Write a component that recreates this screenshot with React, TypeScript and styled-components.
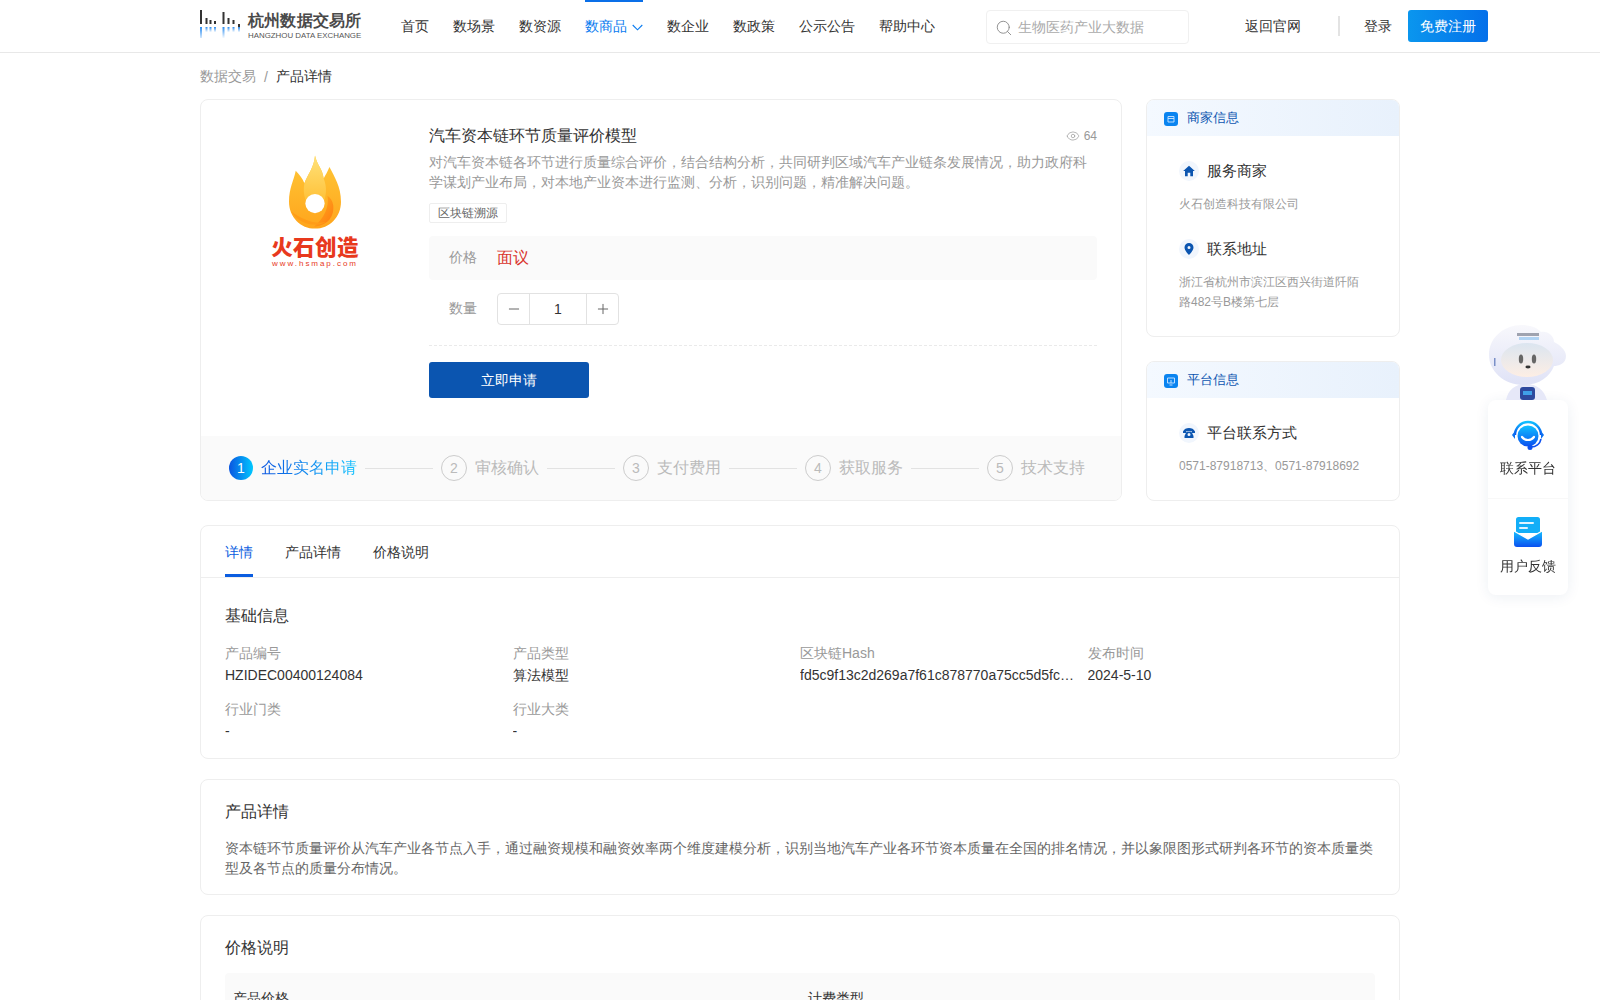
import React from 'react';
import styled, { createGlobalStyle } from 'styled-components';
import { Eye, Minus, Plus, Search } from 'lucide-react';

const Global = createGlobalStyle`
  html, body { margin: 0; padding: 0; background: #fff; overflow: hidden; height: 1000px; }
  body { font-family: "Liberation Sans", sans-serif; color: #333; font-size: 14px; }
  * { box-sizing: border-box; }
`;

const Header = styled.header`
  height: 53px;
  border-bottom: 1px solid #e8e8e8;
  padding-left: 200px;
  display: flex;
  align-items: flex-start;
  background: #fff;
`;
const LogoWrap = styled.div`
  width: 162px;
  height: 52px;
  margin-right: 39px;
  display: flex;
  align-items: flex-start;
  padding-top: 10px;
  gap: 6px;
`;
const LogoText = styled.div`
  display: flex;
  flex-direction: column;
  padding: 2px 0 0 1px;
`;
const LogoCn = styled.span`
  font-size: 16px;
  line-height: 18px;
  font-weight: 700;
  letter-spacing: 0.2px;
  white-space: nowrap;
  color: #4a4a4a;
`;
const LogoEn = styled.span`
  font-size: 7.9px;
  line-height: 11px;
  white-space: nowrap;
  color: #555;
`;
const Nav = styled.nav`
  display: flex;
  gap: 24px;
`;
const NavItem = styled.a<{ $active?: boolean }>`
  height: 52px;
  display: flex;
  align-items: center;
  gap: 5px;
  font-size: 14px;
  color: ${p => (p.$active ? '#0a7cf0' : '#333')};
  border-top: 2px solid ${p => (p.$active ? '#0a6fe8' : 'transparent')};
  white-space: nowrap;
`;
const SearchBox = styled.div`
  width: 203px;
  height: 34px;
  margin: 10px 0 0 51px;
  padding: 2px 0 0 8px;
  border: 1px solid #f0f0f0;
  border-radius: 4px;
  display: flex;
  align-items: center;
  gap: 5px;
  color: #888;
`;
const Placeholder = styled.span`
  color: #aaa;
  font-size: 14px;
`;
const TopLink = styled.a<{ $ml: number }>`
  margin-left: ${p => p.$ml}px;
  height: 52px;
  padding-top: 1px;
  display: flex;
  align-items: center;
  font-size: 14px;
  color: #333;
  white-space: nowrap;
`;
const VLine = styled.span`
  width: 2px;
  height: 20px;
  margin: 16px 0 0 37px;
  background: #e3e3e3;
`;
const Register = styled.button`
  width: 80px;
  height: 32px;
  margin: 10px 0 0 16px;
  padding: 1px 0 0;
  border: 0;
  border-radius: 3px;
  color: #fff;
  font: inherit;
  font-size: 14px;
  background: linear-gradient(90deg, #0a96ee, #0470ea);
`;

const Page = styled.main`
  width: 1200px;
  margin: 0 auto;
`;
const Crumbs = styled.div`
  height: 46px;
  padding-top: 2px;
  display: flex;
  align-items: center;
  gap: 8px;
  font-size: 14px;
  color: #999;
`;
const CrumbNow = styled.span`
  color: #333;
`;
const TopRow = styled.div`
  display: flex;
  justify-content: space-between;
  align-items: stretch;
`;
const Card = styled.section`
  border: 1px solid #eeeeee;
  border-radius: 8px;
  background: #fff;
  overflow: hidden;
`;
const MainCard = styled(Card)`
  width: 922px;
  height: 402px;
  display: flex;
  flex-direction: column;
`;
const Product = styled.div`
  flex: 1;
  display: flex;
  padding: 24px 24px 0 0;
`;
const Brand = styled.div`
  width: 228px;
  flex: none;
  display: flex;
  flex-direction: column;
  align-items: center;
  padding-top: 30px;
`;
const BrandCn = styled.span`
  margin-top: 3px;
  font-size: 21.5px;
  line-height: 26px;
  font-weight: 900;
  font-family: "Noto Sans CJK SC", sans-serif;
  color: #e8391d;
  letter-spacing: 0.4px;
`;
const BrandEn = styled.span`
  font-size: 8px;
  line-height: 9px;
  color: #e8391d;
  letter-spacing: 1.95px;
`;
const Info = styled.div`
  flex: 1;
  min-width: 0;
`;
const TitleRow = styled.div`
  display: flex;
  justify-content: space-between;
  align-items: center;
  height: 24px;
`;
const Title = styled.h1`
  margin: 0;
  font-size: 16px;
  font-weight: 400;
  color: #333;
`;
const Views = styled.span`
  display: flex;
  align-items: center;
  gap: 4px;
  font-size: 12px;
  color: #999;
`;
const Desc = styled.p`
  margin: 4px 0 0;
  font-size: 14px;
  line-height: 20px;
  color: #999;
`;
const Tag = styled.span`
  display: inline-block;
  margin-top: 11px;
  height: 20px;
  padding: 0 8px;
  border: 1px solid #eee;
  border-radius: 2px;
  font-size: 12px;
  line-height: 18px;
  color: #666;
`;
const PriceRow = styled.div`
  margin-top: 13px;
  height: 44px;
  background: #fafafa;
  border-radius: 4px;
  display: flex;
  align-items: center;
  padding-left: 20px;
`;
const FieldLabel = styled.span`
  width: 48px;
  flex: none;
  font-size: 14px;
  color: #999;
`;
const PriceValue = styled.span`
  font-size: 16px;
  color: #d9322c;
`;
const QtyRow = styled.div`
  margin-top: 13px;
  display: flex;
  align-items: center;
  padding: 0 0 20px 20px;
  border-bottom: 1px dashed #eaeaea;
`;
const Stepper = styled.div`
  width: 122px;
  height: 32px;
  display: flex;
  border: 1px solid #e2e2e2;
  border-radius: 4px;
`;
const StepBtn = styled.span`
  width: 31px;
  display: flex;
  align-items: center;
  justify-content: center;
  color: #666;
`;
const StepVal = styled.span`
  flex: 1;
  border-left: 1px solid #e2e2e2;
  border-right: 1px solid #e2e2e2;
  display: flex;
  align-items: center;
  justify-content: center;
  font-size: 14px;
  color: #333;
`;
const Apply = styled.button`
  margin-top: 16px;
  padding: 1px 0 0;
  display: block;
  width: 160px;
  height: 36px;
  border: 0;
  border-radius: 3px;
  background: #0b55b0;
  color: #fff;
  font: inherit;
  font-size: 14px;
`;
const Steps = styled.div`
  height: 64px;
  flex: none;
  background: #fafafa;
  display: flex;
  align-items: center;
  padding-left: 28px;
  gap: 8px;
`;
const StepCircle = styled.span<{ $active?: boolean }>`
  width: ${p => (p.$active ? 24 : 26)}px;
  height: ${p => (p.$active ? 24 : 26)}px;
  border-radius: 50%;
  display: flex;
  align-items: center;
  justify-content: center;
  font-size: 14px;
  color: ${p => (p.$active ? '#fff' : '#bbb')};
  border: ${p => (p.$active ? '0' : '1px solid #ccc')};
  background: ${p => (p.$active ? 'linear-gradient(90deg, #0a55e0, #00c8ff)' : 'transparent')};
`;
const StepText = styled.span<{ $active?: boolean }>`
  font-size: 16px;
  white-space: nowrap;
  color: ${p => (p.$active ? 'transparent' : '#bbb')};
  background: ${p => (p.$active ? 'linear-gradient(90deg, #0a55e0, #18c4ff)' : 'none')};
  -webkit-background-clip: ${p => (p.$active ? 'text' : 'border-box')};
  background-clip: ${p => (p.$active ? 'text' : 'border-box')};
`;
const StepLine = styled.span`
  width: 68px;
  height: 1px;
  background: #e2e2e2;
  margin: 1px 0 0;
`;
const Side = styled.aside`
  width: 254px;
  display: flex;
  flex-direction: column;
  gap: 24px;
`;
const SideCard = styled(Card)<{ $grow?: boolean }>`
  height: ${p => (p.$grow ? 'auto' : '238px')};
  flex: ${p => (p.$grow ? 1 : 'none')};
`;
const SideHead = styled.div`
  height: 36px;
  display: flex;
  align-items: center;
  gap: 9px;
  padding-left: 17px;
  font-size: 13px;
  color: #0b55b0;
  background: linear-gradient(90deg, #f4f9ff, #e8f1fc);
`;
const SideBody = styled.div`
  padding: 25px 32px 0;
`;
const SideTitle = styled.div`
  display: flex;
  align-items: center;
  gap: 8px;
  height: 20px;
  font-size: 15px;
  color: #333;
  white-space: nowrap;
`;
const IconDot = styled.span`
  width: 20px;
  height: 20px;
  border-radius: 50%;
  background: #f1f6fd;
  display: flex;
  align-items: center;
  justify-content: center;
`;
const SideText = styled.p`
  margin: 13px 0 25px;
  font-size: 12px;
  line-height: 20px;
  color: #999;
  width: 186px;
  white-space: nowrap;
  &:last-child { margin-bottom: 0; }
`;
const SideWrap = styled(SideText)`
  white-space: normal;
`;
const Tabs = styled.div`
  height: 52px;
  display: flex;
  gap: 32px;
  padding-left: 24px;
  border-bottom: 1px solid #eee;
`;
const Tab = styled.span<{ $active?: boolean }>`
  height: 51px;
  display: flex;
  align-items: center;
  font-size: 14px;
  color: ${p => (p.$active ? '#0b5de0' : '#333')};
  border-bottom: 3px solid ${p => (p.$active ? '#0b5de0' : 'transparent')};
  padding-top: 5px;
`;
const DetailCard = styled(Card)`
  margin-top: 24px;
  height: 234px;
`;
const Section = styled.div`
  padding: 26px 24px 0;
`;
const SectionTitle = styled.h2`
  margin: 0;
  font-size: 16px;
  line-height: 24px;
  font-weight: 400;
  color: #333;
`;
const Grid = styled.div`
  display: grid;
  grid-template-columns: repeat(4, 287.5px);
  margin-top: 14px;
  row-gap: 12px;
`;
const Cell = styled.div`
  min-width: 0;
  padding-right: 12px;
`;
const CellLabel = styled.div`
  font-size: 14px;
  line-height: 22px;
  color: #999;
`;
const CellValue = styled.div`
  font-size: 14px;
  line-height: 22px;
  color: #333;
  white-space: nowrap;
  overflow: hidden;
  text-overflow: ellipsis;
`;
const TextCard = styled(Card)`
  margin-top: 20px;
  height: 116px;
`;
const TextSection = styled.div`
  padding: 20px 24px 0;
`;
const Body = styled.p`
  margin: 14px 0 0;
  font-size: 14px;
  line-height: 20px;
  color: #666;
`;
const PriceCard = styled(Card)`
  margin-top: 20px;
  height: 160px;
`;
const PriceTable = styled.div`
  margin-top: 13px;
  background: #fafafa;
  border-radius: 4px 4px 0 0;
  display: grid;
  grid-template-columns: 575px 575px;
  padding: 15px 8px;
  font-size: 14px;
  line-height: 20px;
  color: #333;
`;
const Float = styled.div`
  position: fixed;
  left: 1488px;
  top: 400px;
  width: 80px;
  background: #fff;
  border-radius: 8px;
  box-shadow: 0 2px 14px rgba(30, 60, 120, 0.08);
`;
const Robot = styled.svg`
  position: absolute;
  left: 0;
  top: -76px;
`;
const FloatItem = styled.div`
  height: 98px;
  display: flex;
  flex-direction: column;
  align-items: center;
  padding-top: 20px;
  font-size: 14px;
  color: #333;
  gap: 8px;
  & + & {
    border-top: 1px solid #f8f8f8;
    height: 97px;
    padding-top: 18px;
    gap: 11px;
  }
`;

const BARS: [number, number][] = [
  [1, 14], [6.5, 6], [10.5, 4], [15, 3], [23.5, 12], [28.5, 6], [33.5, 4], [39, 3],
];

const LogoMark = () => (
  <svg width="41" height="28" viewBox="0 0 41 28" style={{ flex: 'none' }}>
    <defs>
      <linearGradient id="lg" x1="0" y1="0" x2="0" y2="1">
        <stop offset="0" stopColor="#2a8cf0" />
        <stop offset="1" stopColor="#2a8cf0" stopOpacity="0.05" />
      </linearGradient>
    </defs>
    {BARS.map(([x, h], i) => (
      <g key={i}>
        <rect x={x - 1} y={14 - h + (i === 7 ? 3 : 0)} width="2" height={h} fill="#333" />
        <rect x={x - 1} y={17} width="2" height={Math.max(5, h - 1)} fill="url(#lg)" />
      </g>
    ))}
  </svg>
);

const Flame = () => (
  <svg width="52" height="76" viewBox="0 0 54 76">
    <defs>
      <linearGradient id="f1" x1="0" y1="0" x2="0" y2="1">
        <stop offset="0" stopColor="#ffe27a" />
        <stop offset="1" stopColor="#ffc23a" />
      </linearGradient>
      <linearGradient id="f2" x1="0" y1="0" x2="1" y2="1">
        <stop offset="0" stopColor="#ffb020" />
        <stop offset="1" stopColor="#ff7a10" />
      </linearGradient>
      <linearGradient id="f3" x1="0" y1="0" x2="0" y2="1">
        <stop offset="0" stopColor="#ffc838" />
        <stop offset="1" stopColor="#ffa51c" />
      </linearGradient>
    </defs>
    <path d="M27 0c2 10 8 14 9 24 2-4 4-7 6-12 5 10 12 20 12 36 0 16-12 28-27 28S0 64 0 48c0-14 5-22 7-32 4 4 7 8 9 13 3-9 10-16 11-29z" fill="url(#f3)" />
    <path d="M27 0c2 10 8 14 9 24 3 8 3 14 1 22H17c-2-6-2-12-1-17 3-9 10-16 11-29z" fill="url(#f1)" />
    <path d="M26 74c12-1 21-8 20-22-1-5-3-8-6-10 2 12-4 24-14 32z" fill="url(#f2)" />
    <path d="M2 58c6 10 16 14 26 14 4 0 8-1 10-3-10 3-24-2-36-11z" fill="#ff9c18" />
    <circle cx="27" cy="50" r="10" fill="#fff" />
  </svg>
);

const HeadIcon = ({ kind }: { kind: 'shop' | 'screen' }) => (
  <svg width="14" height="14" viewBox="0 0 14 14" style={{ marginTop: 1 }}>
    <rect width="14" height="14" rx="3" fill="#0a84f0" />
    {kind === 'shop' ? (
      <path d="M4 4.5h6v5.5H4zM4 6.5h6" fill="none" stroke="#cfe6ff" strokeWidth="0.9" />
    ) : (
      <path d="M3.5 4h7v5h-7zM5.5 11h3M7 6v3" fill="none" stroke="#cfe6ff" strokeWidth="0.9" />
    )}
  </svg>
);

const HomeIcon = () => (
  <svg width="12" height="12" viewBox="0 0 12 12">
    <path d="M6 .8 11.8 6H10v5.2H7.3V7.8H4.7v3.4H2V6H.2z" fill="#0b55b0" />
  </svg>
);
const PinIcon = () => (
  <svg width="10" height="12" viewBox="0 0 10 12">
    <path fillRule="evenodd" d="M5 0a4.5 4.5 0 0 1 4.5 4.5C9.5 7.6 5 12 5 12S.5 7.6.5 4.5A4.5 4.5 0 0 1 5 0zm0 3a1.5 1.5 0 1 0 0 3 1.5 1.5 0 0 0 0-3z" fill="#0b55b0" />
  </svg>
);
const PhoneIcon = () => (
  <svg width="12" height="10" viewBox="0 0 12 10">
    <path d="M0 3.5C1 1 3.5 0 6 0s5 1 6 3.5V5H9V3.2H3V5H0z" fill="#0b55b0" />
    <path fillRule="evenodd" d="M3.5 3.8h5L10.5 8v2h-9V8zM6 5a1.5 1.5 0 1 0 0 3 1.5 1.5 0 0 0 0-3z" fill="#0b55b0" />
  </svg>
);
const Chevron = () => (
  <svg width="11" height="7" viewBox="0 0 11 7">
    <path d="M.7 1 5.500 5.800 10.300 1" fill="none" stroke="currentColor" strokeWidth="1.1" />
  </svg>
);

const ServiceIcon = () => (
  <svg width="34" height="32" viewBox="0 0 34 32">
    <defs>
      <linearGradient id="s1" x1="0" y1="0" x2="0" y2="1">
        <stop offset="0" stopColor="#10c0ff" />
        <stop offset="1" stopColor="#0b50f0" />
      </linearGradient>
    </defs>
    <path d="M4 15a13 13 0 0 1 26 0" fill="none" stroke="url(#s1)" strokeWidth="2.4" />
    <circle cx="17" cy="16" r="10.5" fill="url(#s1)" />
    <path d="M11 17c3 4 9 4 12 0" fill="none" stroke="#fff" strokeWidth="2.2" strokeLinecap="round" />
    <path d="M4 11 1 15l3 4zM30 11l3 4-3 4z" fill="#0b70f0" />
    <path d="M30 19c-1 5-5 8-10 8" fill="none" stroke="#0b50f0" strokeWidth="1.6" />
    <circle cx="19" cy="27.5" r="2.5" fill="#0b50f0" />
  </svg>
);
const FeedbackIcon = () => (
  <svg width="28" height="30" viewBox="0 0 28 30">
    <defs>
      <linearGradient id="m1" x1="0" y1="0" x2="0" y2="1">
        <stop offset="0" stopColor="#16c0ff" />
        <stop offset="1" stopColor="#0a50f0" />
      </linearGradient>
    </defs>
    <path d="M2 2.5A2.5 2.5 0 0 1 4.500 0h19A2.500 2.500 0 0 1 26 2.500V16H2z" fill="#12aef8" />
    <rect x="5" y="5" width="15" height="2" rx="1" fill="#dff3ff" />
    <rect x="5" y="10" width="9" height="2" rx="1" fill="#dff3ff" />
    <path d="M0 14l14 8 14-8v13a3 3 0 0 1-3 3H3a3 3 0 0 1-3-3z" fill="url(#m1)" />
    <path d="M0 14l14 8 14-8" fill="none" stroke="#fff" strokeWidth="1.2" />
  </svg>
);
const RobotArt = () => (
  <Robot width="80" height="76" viewBox="0 0 80 76">
    <defs>
      <linearGradient id="r1" x1="0" y1="0" x2="0" y2="1">
        <stop offset="0" stopColor="#f8f8fc" />
        <stop offset="1" stopColor="#dfe2f6" />
      </linearGradient>
      <linearGradient id="r2" x1="0" y1="0" x2="0" y2="1">
        <stop offset="0" stopColor="#dbe5f0" />
        <stop offset="1" stopColor="#fdeee4" />
      </linearGradient>
      <filter id="rb"><feGaussianBlur stdDeviation="0.5" /></filter>
    </defs>
    <g filter="url(#rb)">
      <path d="M18 76c2-10 9-16 20-16s18 6 21 16z" fill="#e6e8f8" />
      <rect x="32" y="63" width="15" height="13" rx="3" fill="#2e4a9e" />
      <rect x="35" y="67" width="9" height="4" fill="#3fa0e8" />
      <path d="M1 31C1 12 18 1 33 1c9 0 15 2 20 7 7-1 13 4 13 10 6 3 12 8 12 14 0 8-8 10-12 10-4 10-14 19-31 19C16 61 1 47 1 31z" fill="url(#r1)" />
      <ellipse cx="39" cy="36" rx="26" ry="17" fill="url(#r2)" />
      <ellipse cx="33" cy="35" rx="2.2" ry="4.5" fill="#666" />
      <ellipse cx="46" cy="35" rx="2.2" ry="4.5" fill="#666" />
      <ellipse cx="40" cy="43" rx="2.6" ry="1.4" fill="#333" />
      <rect x="29" y="9" width="22" height="3" fill="#7a8090" opacity="0.7" />
      <rect x="31" y="13" width="20" height="3" fill="#6db4ee" opacity="0.5" />
      <rect x="6" y="34" width="1.5" height="8" fill="#7a90c8" />
    </g>
  </Robot>
);

const stepsData = ['企业实名申请', '审核确认', '支付费用', '获取服务', '技术支持'];

export default function App() {
  return (
    <>
      <Global />
      <Header>
        <LogoWrap>
          <LogoMark />
          <LogoText>
            <LogoCn>杭州数据交易所</LogoCn>
            <LogoEn>HANGZHOU DATA EXCHANGE</LogoEn>
          </LogoText>
        </LogoWrap>
        <Nav>
          <NavItem>首页</NavItem>
          <NavItem>数场景</NavItem>
          <NavItem>数资源</NavItem>
          <NavItem $active>
            数商品
            <Chevron />
          </NavItem>
          <NavItem>数企业</NavItem>
          <NavItem>数政策</NavItem>
          <NavItem>公示公告</NavItem>
          <NavItem>帮助中心</NavItem>
        </Nav>
        <SearchBox>
          <Search size={18} strokeWidth={1.2} />
          <Placeholder>生物医药产业大数据</Placeholder>
        </SearchBox>
        <TopLink $ml={56}>返回官网</TopLink>
        <VLine />
        <TopLink $ml={24}>登录</TopLink>
        <Register>免费注册</Register>
      </Header>
      <Page>
        <Crumbs>
          <span>数据交易</span>
          <span>/</span>
          <CrumbNow>产品详情</CrumbNow>
        </Crumbs>
        <TopRow>
          <MainCard>
            <Product>
              <Brand>
                <Flame />
                <BrandCn>火石创造</BrandCn>
                <BrandEn>www.hsmap.com</BrandEn>
              </Brand>
              <Info>
                <TitleRow>
                  <Title>汽车资本链环节质量评价模型</Title>
                  <Views>
                    <Eye size={14} strokeWidth={1.2} />
                    64
                  </Views>
                </TitleRow>
                <Desc>
                  对汽车资本链各环节进行质量综合评价，结合结构分析，共同研判区域汽车产业链条发展情况，助力政府科学谋划产业布局，对本地产业资本进行监测、分析，识别问题，精准解决问题。
                </Desc>
                <Tag>区块链溯源</Tag>
                <PriceRow>
                  <FieldLabel>价格</FieldLabel>
                  <PriceValue>面议</PriceValue>
                </PriceRow>
                <QtyRow>
                  <FieldLabel>数量</FieldLabel>
                  <Stepper>
                    <StepBtn>
                      <Minus size={16} strokeWidth={1.5} />
                    </StepBtn>
                    <StepVal>1</StepVal>
                    <StepBtn>
                      <Plus size={16} strokeWidth={1.5} />
                    </StepBtn>
                  </Stepper>
                </QtyRow>
                <Apply>立即申请</Apply>
              </Info>
            </Product>
            <Steps>
              {stepsData.map((s, i) => (
                <React.Fragment key={s}>
                  {i > 0 && <StepLine />}
                  <StepCircle $active={i === 0}>{i + 1}</StepCircle>
                  <StepText $active={i === 0}>{s}</StepText>
                </React.Fragment>
              ))}
            </Steps>
          </MainCard>
          <Side>
            <SideCard>
              <SideHead>
                <HeadIcon kind="shop" />
                商家信息
              </SideHead>
              <SideBody>
                <SideTitle>
                  <IconDot>
                    <HomeIcon />
                  </IconDot>
                  服务商家
                </SideTitle>
                <SideText>火石创造科技有限公司</SideText>
                <SideTitle>
                  <IconDot>
                    <PinIcon />
                  </IconDot>
                  联系地址
                </SideTitle>
                <SideWrap>浙江省杭州市滨江区西兴街道阡陌路482号B楼第七层</SideWrap>
              </SideBody>
            </SideCard>
            <SideCard $grow>
              <SideHead>
                <HeadIcon kind="screen" />
                平台信息
              </SideHead>
              <SideBody>
                <SideTitle>
                  <IconDot>
                    <PhoneIcon />
                  </IconDot>
                  平台联系方式
                </SideTitle>
                <SideText>0571-87918713、0571-87918692</SideText>
              </SideBody>
            </SideCard>
          </Side>
        </TopRow>
        <DetailCard>
          <Tabs>
            <Tab $active>详情</Tab>
            <Tab>产品详情</Tab>
            <Tab>价格说明</Tab>
          </Tabs>
          <Section>
            <SectionTitle>基础信息</SectionTitle>
            <Grid>
              <Cell>
                <CellLabel>产品编号</CellLabel>
                <CellValue>HZIDEC00400124084</CellValue>
              </Cell>
              <Cell>
                <CellLabel>产品类型</CellLabel>
                <CellValue>算法模型</CellValue>
              </Cell>
              <Cell>
                <CellLabel>区块链Hash</CellLabel>
                <CellValue>fd5c9f13c2d269a7f61c878770a75cc5d5fc8e1b02a4</CellValue>
              </Cell>
              <Cell>
                <CellLabel>发布时间</CellLabel>
                <CellValue>2024-5-10</CellValue>
              </Cell>
              <Cell>
                <CellLabel>行业门类</CellLabel>
                <CellValue>-</CellValue>
              </Cell>
              <Cell>
                <CellLabel>行业大类</CellLabel>
                <CellValue>-</CellValue>
              </Cell>
            </Grid>
          </Section>
        </DetailCard>
        <TextCard>
          <TextSection>
            <SectionTitle>产品详情</SectionTitle>
            <Body>
              资本链环节质量评价从汽车产业各节点入手，通过融资规模和融资效率两个维度建模分析，识别当地汽车产业各环节资本质量在全国的排名情况，并以象限图形式研判各环节的资本质量类型及各节点的质量分布情况。
            </Body>
          </TextSection>
        </TextCard>
        <PriceCard>
          <TextSection>
            <SectionTitle>价格说明</SectionTitle>
            <PriceTable>
              <span>产品价格</span>
              <span>计费类型</span>
            </PriceTable>
          </TextSection>
        </PriceCard>
      </Page>
      <Float>
        <RobotArt />
        <FloatItem>
          <ServiceIcon />
          联系平台
        </FloatItem>
        <FloatItem>
          <FeedbackIcon />
          用户反馈
        </FloatItem>
      </Float>
    </>
  );
}
